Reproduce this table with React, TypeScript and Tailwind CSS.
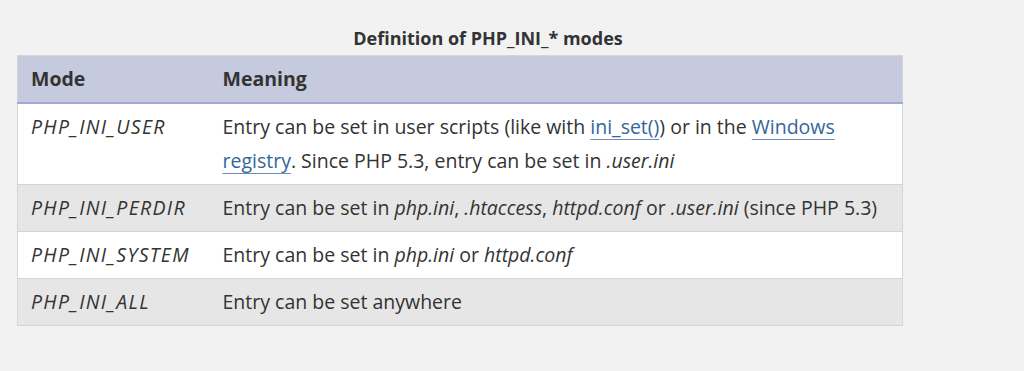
const rows = [
  {
    mode: "PHP_INI_USER",
    meaning: (
      <>
        Entry can be set in user scripts (like with{" "}
        <a className="text-[#336699] underline decoration-[#6b8cc0] underline-offset-[5px]">ini_set()</a>) or in the{" "}
        <a className="text-[#336699] underline decoration-[#6b8cc0] underline-offset-[5px]">Windows registry</a>. Since PHP 5.3,
        entry can be set in <em>.user.ini</em>
      </>
    ),
  },
  {
    mode: "PHP_INI_PERDIR",
    meaning: (
      <>
        Entry can be set in <em>php.ini</em>, <em>.htaccess</em>, <em>httpd.conf</em> or <em>.user.ini</em> (since PHP
        5.3)
      </>
    ),
  },
  {
    mode: "PHP_INI_SYSTEM",
    meaning: (
      <>
        Entry can be set in <em>php.ini</em> or <em>httpd.conf</em>
      </>
    ),
  },
  { mode: "PHP_INI_ALL", meaning: <>Entry can be set anywhere</> },
];

export default function App() {
  return (
    <div className="min-h-[371px] bg-[#f2f2f2] pt-[21px] pl-[17px] font-['Open_Sans',sans-serif] text-[#333]">
      <div className="w-[886px]">
        <div className="pl-[56px] text-center text-[18px] leading-[34px] font-bold">Definition of PHP_INI_* modes</div>
        <table className="w-full border-collapse border border-[#d6d6d6] text-[19.5px] leading-[34px]">
          <thead>
            <tr className="bg-[#c5cadf] border-b-2 border-[#a3aad1]">
              <th className="w-[192px] px-[13px] py-[6px] text-left font-bold">Mode</th>
              <th className="px-[13px] py-[6px] text-left font-bold">Meaning</th>
            </tr>
          </thead>
          <tbody>
            {rows.map((r, i) => (
              <tr key={r.mode} className={`${i % 2 ? "bg-[#e6e6e6]" : "bg-white"} border-b border-[#d4d4d4]`}>
                <td className="px-[13px] py-[6px] align-top italic tracking-[1.3px]">{r.mode}</td>
                <td className="px-[13px] py-[6px] align-top">{r.meaning}</td>
              </tr>
            ))}
          </tbody>
        </table>
      </div>
    </div>
  );
}
